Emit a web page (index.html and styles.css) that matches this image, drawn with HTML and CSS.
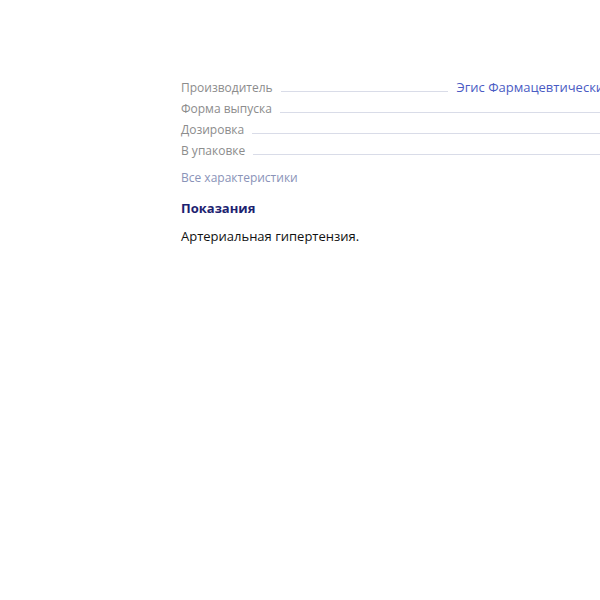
FILE: index.html
```html
<!DOCTYPE html>
<html lang="ru">
<head>
    <meta charset="UTF-8">
    <meta name="viewport" content="width=device-width, initial-scale=1.0">
    <title>Характеристики</title>
    <link rel="stylesheet" href="styles.css">
</head>
<body>
    <div class="product">
        <ul class="props">
            <li class="prop">
                <span class="prop-name">Производитель</span>
                <span class="prop-line"></span>
                <a class="prop-value link" href="#">Эгис Фармацевтический завод ЗАО, Венгрия</a>
            </li>
            <li class="prop">
                <span class="prop-name">Форма выпуска</span>
                <span class="prop-line"></span>
                <span class="prop-value">таблетки</span>
            </li>
            <li class="prop">
                <span class="prop-name">Дозировка</span>
                <span class="prop-line"></span>
                <span class="prop-value">10 мг</span>
            </li>
            <li class="prop">
                <span class="prop-name">В упаковке</span>
                <span class="prop-line"></span>
                <span class="prop-value">30 шт.</span>
            </li>
        </ul>
        <a class="all-props" href="#">Все характеристики</a>
        <section class="indications">
            <h2>Показания</h2>
            <p>Артериальная гипертензия.</p>
        </section>
    </div>
</body>
</html>
```

FILE: styles.css
```css
html, body {
    margin: 0;
    padding: 0;
    background: #fff;
    overflow: hidden;
}
body {
    font-family: "Open Sans", "Noto Sans", sans-serif;
    color: #111;
    width: 600px;
    height: 600px;
}
.product {
    width: 560px;
    padding: 78px 0 0 181px;
}
.props {
    list-style: none;
    margin: 0;
    padding: 0;
}
.prop {
    display: flex;
    align-items: baseline;
    height: 21px;
    white-space: nowrap;
}
.prop-name {
    font-size: 12px;
    color: #8c8c8c;
}
.prop-line {
    flex: 1;
    margin: 0 8px;
    border-bottom: 1px solid #d9dce8;
}
.prop-value {
    font-size: 13px;
    color: #222;
}
.link {
    color: #4a5cc4;
    text-decoration: none;
}
.all-props {
    display: inline-block;
    margin-top: 7px;
    font-size: 12px;
    color: #8a93b8;
    text-decoration: none;
}
.indications h2 {
    margin: 12px 0 0;
    font-size: 13px;
    font-weight: bold;
    color: #1c2270;
}
.indications p {
    margin: 10px 0 0;
    font-size: 13px;
}
```
